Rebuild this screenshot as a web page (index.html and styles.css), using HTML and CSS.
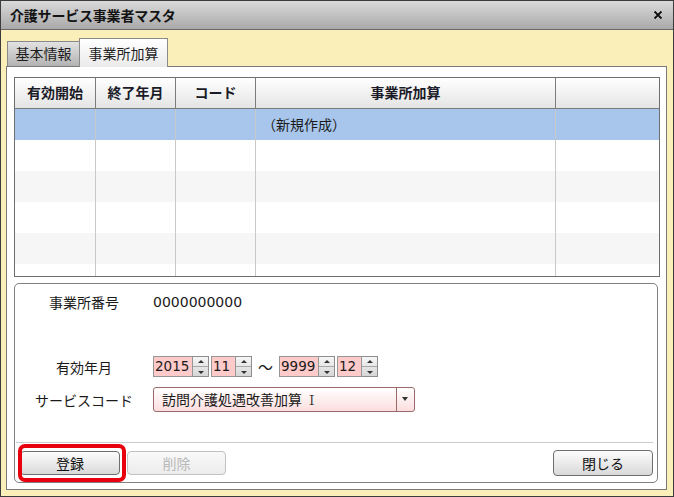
FILE: index.html
```html
<!DOCTYPE html>
<html lang="ja">
<head>
<meta charset="utf-8">
<title>介護サービス事業者マスタ</title>
<link rel="stylesheet" href="styles.css">
</head>
<body>
<div class="window">
  <div class="titlebar">
    <span class="title">介護サービス事業者マスタ</span>
    <svg class="close" width="10" height="10" viewBox="0 0 10 10"><path d="M1.5 1.5 L8.5 8.5 M8.5 1.5 L1.5 8.5" stroke="#fff" stroke-width="3" opacity="0.5"/><path d="M1.5 1.5 L8.5 8.5 M8.5 1.5 L1.5 8.5" stroke="#111" stroke-width="2"/></svg>
  </div>
  <div class="client">
    <div class="tabs">
      <div class="tab">基本情報</div>
      <div class="tab active">事業所加算</div>
    </div>
    <div class="panel">
      <div class="grid">
        <div class="grow head">
          <div class="cell">有効開始</div>
          <div class="cell">終了年月</div>
          <div class="cell">コード</div>
          <div class="cell">事業所加算</div>
          <div class="cell"></div>
        </div>
        <div class="grow sel">
          <div class="cell"></div><div class="cell"></div><div class="cell"></div>
          <div class="cell name">（新規作成）</div><div class="cell"></div>
        </div>
        <div class="grow">
          <div class="cell"></div><div class="cell"></div><div class="cell"></div><div class="cell"></div><div class="cell"></div>
        </div>
        <div class="grow alt">
          <div class="cell"></div><div class="cell"></div><div class="cell"></div><div class="cell"></div><div class="cell"></div>
        </div>
        <div class="grow">
          <div class="cell"></div><div class="cell"></div><div class="cell"></div><div class="cell"></div><div class="cell"></div>
        </div>
        <div class="grow alt">
          <div class="cell"></div><div class="cell"></div><div class="cell"></div><div class="cell"></div><div class="cell"></div>
        </div>
        <div class="grow">
          <div class="cell"></div><div class="cell"></div><div class="cell"></div><div class="cell"></div><div class="cell"></div>
        </div>
      </div>
      <div class="form">
        <div class="frow r1">
          <div class="label">事業所番号</div>
          <div class="value num">0000000000</div>
        </div>
        <div class="frow r2">
          <div class="label">有効年月</div>
          <div class="value period">
            <span class="spin-input w4">2015</span><span class="spin"><span class="up"></span><span class="down"></span></span>
            <span class="spin-input w2">11</span><span class="spin"><span class="up"></span><span class="down"></span></span>
            <span class="tilde">〜</span>
            <span class="spin-input w4">9999</span><span class="spin"><span class="up"></span><span class="down"></span></span>
            <span class="spin-input w2">12</span><span class="spin"><span class="up"></span><span class="down"></span></span>
          </div>
        </div>
        <div class="frow r3">
          <div class="label">サービスコード</div>
          <div class="value">
            <div class="select"><span class="select-text">訪問介護処遇改善加算 <span class="roman">Ⅰ</span></span><span class="select-arrow"></span></div>
          </div>
        </div>
        <div class="sep"></div>
        <div class="footer">
          <div class="btn-wrap"><button class="btn">登録</button><span class="mark"></span></div>
          <button class="btn" disabled>削除</button>
          <button class="btn btn-close">閉じる</button>
        </div>
      </div>
    </div>
  </div>
</div>
</body>
</html>
```

FILE: styles.css
```css
html, body {
  margin: 0;
  padding: 0;
}
body {
  width: 674px;
  height: 497px;
  overflow: hidden;
  font-family: "DejaVu Sans", "Noto Sans CJK JP", sans-serif;
  font-size: 14px;
  color: #1a1a1a;
}
.window {
  box-sizing: border-box;
  width: 674px;
  height: 497px;
  border: 1px solid #3c3c3c;
  background: #faefb9;
  display: flex;
  flex-direction: column;
}
.titlebar {
  height: 28px;
  border-bottom: 1px solid #6a6a6a;
  background: linear-gradient(#dadada, #a9a9a9);
  display: flex;
  align-items: center;
  justify-content: space-between;
  padding: 0 10px 0 9px;
}
.title {
  font-family: "Noto Sans CJK JP", sans-serif;
  font-weight: bold;
  font-size: 14px;
  color: #141414;
  letter-spacing: -0.2px;
}
.close {
  display: block;
}
.client {
  flex: 1;
  display: flex;
  flex-direction: column;
  padding: 8px 6px 6px 5px;
  min-height: 0;
}
.tabs {
  display: flex;
  align-items: flex-end;
  height: 28px;
  padding-left: 1px;
  position: relative;
  z-index: 1;
}
.tab {
  box-sizing: border-box;
  height: 25px;
  width: 73px;
  border: 1px solid #8a8a8a;
  border-bottom: none;
  background: linear-gradient(#e2e2e2, #b3b3b3);
  font-family: "Noto Sans CJK JP", sans-serif;
  font-size: 14px;
  line-height: 23px;
  text-align: center;
  color: #1e1e1e;
}
.tab.active {
  height: 29px;
  width: 89px;
  margin-left: -1px;
  margin-bottom: -1px;
  line-height: 28px;
  background: linear-gradient(#ffffff, #eaeaea);
}
.panel {
  flex: 1;
  min-height: 0;
  border: 1px solid #7a7a7a;
  background: #fff;
  padding: 10px 6px 6px 7px;
  display: flex;
  flex-direction: column;
}
.grid {
  box-sizing: border-box;
  height: 200px;
  border: 1px solid #6e6e6e;
  overflow: hidden;
  flex: none;
}
.grow {
  display: grid;
  grid-template-columns: 80px 80px 80px 300px 1fr;
  height: 31px;
}
.grow .cell {
  border-left: 1px solid #c9c9c9;
}
.grow .cell:first-child {
  border-left: none;
}
.grow.head {
  height: 30px;
  border-bottom: 1px solid #7a7a7a;
  background: linear-gradient(#ffffff, #e4e4e4);
}
.grow.head .cell {
  border-left-color: #7c7c7c;
  font-family: "Noto Sans CJK JP", sans-serif;
  font-weight: bold;
  font-size: 14px;
  line-height: 29px;
  text-align: center;
  color: #1b1b28;
}
.grow.sel {
  background: #a8c6ec;
}
.grow.alt {
  background: #f6f6f6;
}
.cell.name {
  font-family: "Noto Sans CJK JP", sans-serif;
  line-height: 30px;
  padding-left: 6px;
  font-size: 14px;
}
.form {
  margin-top: 6px;
  margin-right: 2px;
  height: 200px;
  box-sizing: border-box;
  border: 1px solid #808080;
  border-radius: 5px;
  display: flex;
  flex-direction: column;
  flex: none;
}
.frow {
  display: grid;
  grid-template-columns: 138px 1fr;
  align-items: center;
}
.label {
  text-align: center;
  font-family: "Noto Sans CJK JP", sans-serif;
  font-size: 14px;
}
.r1 {
  margin-top: 8px;
  height: 20px;
}
.num {
  font-size: 14px;
}
.r2 {
  margin-top: 44px;
  height: 21px;
}
.r3 {
  margin-top: 10px;
  height: 25px;
}
.period {
  display: flex;
  align-items: stretch;
  height: 21px;
}
.spin-input {
  box-sizing: border-box;
  border: 1px solid #969696;
  background: #ffcaca;
  font-size: 13.5px;
  line-height: 19px;
  padding-left: 1px;
  color: #1a1a1a;
}
.spin-input.w4 { width: 40px; }
.spin-input.w2 { width: 25px; margin-left: 2px; }
.spin-input.w4 + .spin + .spin-input { margin-left: 2px; }
.spin {
  box-sizing: border-box;
  width: 16px;
  border: 1px solid #8e8e8e;
  border-left: none;
  display: flex;
  flex-direction: column;
  background: linear-gradient(#f6f6f6, #d6d6d6);
}
.spin .up, .spin .down {
  flex: 1;
  position: relative;
}
.spin .up {
  border-bottom: 1px solid #a8a8a8;
}
.spin .up::after, .spin .down::after {
  content: "";
  position: absolute;
  left: 5px;
  top: 3px;
  border-left: 3px solid transparent;
  border-right: 3px solid transparent;
}
.spin .up::after {
  border-bottom: 3px solid #333;
}
.spin .down::after {
  border-top: 3px solid #333;
  top: 4px;
}
.tilde {
  font-family: "Noto Sans CJK JP", sans-serif;
  width: 15px;
  margin: 0 6px 0 6px;
  line-height: 21px;
  font-size: 15px;
  text-align: center;
}
.select {
  box-sizing: border-box;
  width: 262px;
  height: 25px;
  border: 1px solid #9a6a6a;
  border-radius: 3px;
  background: linear-gradient(#ffffff, #fcdede);
  display: flex;
  align-items: stretch;
}
.select-text {
  flex: 1;
  font-family: "Noto Sans CJK JP", sans-serif;
  font-size: 14px;
  line-height: 23px;
  padding-left: 8px;
}
.roman {
  font-family: "Noto Serif CJK JP", "Liberation Serif", serif;
  font-size: 13px;
}
.select-arrow {
  width: 17px;
  border-left: 1px solid #9a6a6a;
  position: relative;
}
.select-arrow::after {
  content: "";
  position: absolute;
  left: 5px;
  top: 9px;
  border-left: 3.5px solid transparent;
  border-right: 3.5px solid transparent;
  border-top: 4px solid #333;
}
.sep {
  margin: 30px 4px 0 1px;
  height: 1px;
  background: #c8ccd0;
}
.footer {
  margin-top: 8px;
  display: flex;
  gap: 7px;
  padding: 0 4px 0 5px;
}
.btn-wrap {
  position: relative;
  display: flex;
}
.btn {
  box-sizing: border-box;
  width: 100px;
  height: 24px;
  border: 1px solid #6e6e6e;
  border-radius: 4px;
  background: linear-gradient(#fdfdfd, #d9d9d9);
  font-family: "Noto Sans CJK JP", sans-serif;
  font-size: 14px;
  color: #111;
  padding: 0;
  line-height: 22px;
}
.btn:disabled {
  width: 99px;
  border-color: #c2c2c2;
  background: linear-gradient(#f9f9f9, #ececec);
  color: #b9b9b9;
}
.btn-close {
  margin-left: auto;
  height: 26px;
  margin-top: -1px;
}
.mark {
  position: absolute;
  left: -2px;
  top: -7px;
  width: 108px;
  height: 38px;
  box-sizing: border-box;
  border: 4px solid #e8000e;
  border-radius: 7px;
}
```
